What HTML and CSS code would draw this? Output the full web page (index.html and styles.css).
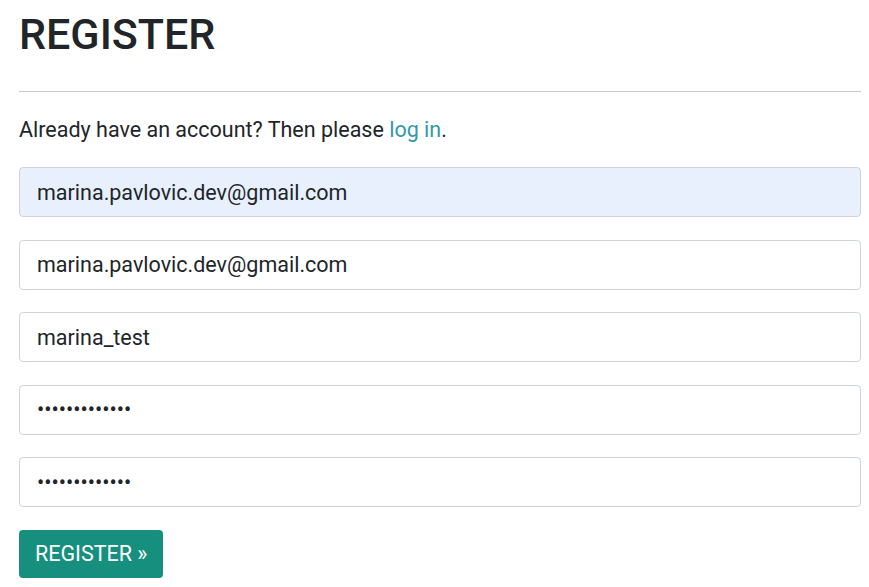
FILE: index.html
```html
<!DOCTYPE html>
<html>
<head>
<meta charset="utf-8">
<link rel="stylesheet" href="styles.css">
</head>
<body>
<main class="page">
  <h1 class="title">REGISTER</h1>
  <hr class="divider">
  <p class="intro">Already have an account? Then please <a class="link" href="#">log in</a>.</p>
  <form class="form">
    <input class="field field-autofill" type="email" value="marina.pavlovic.dev@gmail.com">
    <input class="field" type="email" value="marina.pavlovic.dev@gmail.com">
    <input class="field" type="text" value="marina_test">
    <input class="field field-pass" type="password" value="marinatest123">
    <input class="field field-pass" type="password" value="marinatest123">
    <div class="actions"><button class="btn" type="button">REGISTER »</button></div>
  </form>
</main>
</body>
</html>
```
FILE: styles.css
```css
* { box-sizing: border-box; }
html, body { margin: 0; padding: 0; background: #fff; }
body {
  font-family: Roboto, "Liberation Sans", sans-serif;
  color: #212529;
}
.page { padding: 0 8px 0 19px; }
.title {
  margin: 0;
  padding-top: 10px;
  font-size: 43px;
  font-weight: 500;
  line-height: 48px;
  color: #212529;
}
.divider {
  margin: 33px 0 0 0;
  border: 0;
  border-top: 1px solid #c8c8c8;
  height: 0;
}
.intro {
  margin: 24px 0 0 0;
  font-size: 21.5px;
  line-height: 28px;
}
.link { color: #3399ac; text-decoration: none; }
.form {
  margin-top: 23px;
  display: flex;
  flex-direction: column;
  gap: 22.5px;
}
.field {
  display: block;
  width: 100%;
  height: 50px;
  padding: 0 17px;
  font-family: Roboto, "Liberation Sans", sans-serif;
  font-size: 21.5px;
  color: #212529;
  background: #fff;
  border: 1px solid #ced4da;
  border-radius: 4px;
  outline: none;
}
.field-autofill { background: #e8f0fe; }
.actions { display: flex; }
.btn {
  height: 48px;
  padding: 0 16px;
  font-family: Roboto, "Liberation Sans", sans-serif;
  font-size: 21.5px;
  color: #fff;
  background: #168f7f;
  border: 0;
  border-radius: 4px;
}
```
